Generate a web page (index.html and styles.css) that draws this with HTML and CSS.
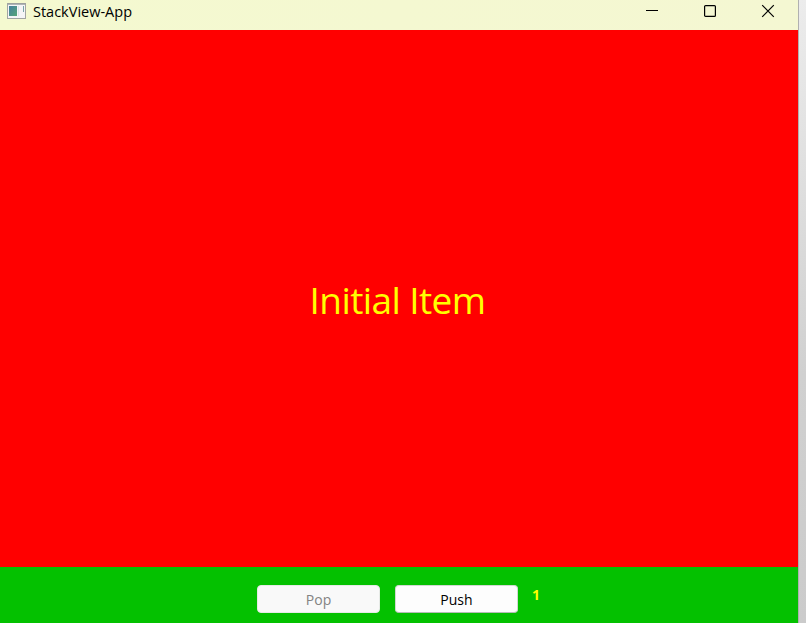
FILE: index.html
```html
<!DOCTYPE html>
<html lang="en">
<head>
<meta charset="utf-8">
<title>StackView-App</title>
<link rel="stylesheet" href="styles.css">
</head>
<body>
<main class="window">
  <header class="titlebar">
    <svg class="app-icon" width="19" height="16" viewBox="0 0 19 16">
      <defs><linearGradient id="pane" x2="1" y2="1"><stop offset="0" stop-color="#477f9f"/><stop offset="1" stop-color="#55a578"/></linearGradient></defs>
      <rect x=".5" y=".5" width="18" height="15" fill="#f5f5f7" stroke="#a2a5a2"/>
      <path d="M1 1.2h17" stroke="#92999a"/>
      <rect x="2" y="3" width="8" height="10" fill="url(#pane)"/>
      <path d="M11.5 3v10" stroke="#dfe3e8"/>
      <path d="M16.5 3v6" stroke="#79a5a7"/>
    </svg>
    <h1 class="title">StackView-App</h1>
    <nav class="controls">
      <svg width="14" height="14" viewBox="0 0 14 14"><path d="M1 6.5h12" stroke="#000"/></svg>
      <svg width="14" height="14" viewBox="0 0 14 14"><rect x="1.6" y="1.6" width="10.8" height="10.8" rx="1" fill="none" stroke="#000" stroke-width="1.2"/></svg>
      <svg width="14" height="14" viewBox="0 0 14 14"><path d="M1.2 1.2l11.6 11.6M12.8 1.2L1.2 12.8" stroke="#000" stroke-width="1.2"/></svg>
    </nav>
  </header>
  <section class="stack"><span class="item">Initial Item</span></section>
  <footer class="toolbar">
    <button class="button" disabled><span>Pop</span></button>
    <button class="button"><span>Push</span></button>
    <span class="depth">1</span>
  </footer>
</main>
</body>
</html>
```
FILE: styles.css
```css
* { box-sizing: border-box; }
body {
  margin: 0;
  height: 623px;
  overflow: hidden;
  background: linear-gradient(#ececec, #d0d0d0 60%, #cbcbcb);
  font-family: "Open Sans", "Noto Sans", sans-serif;
}
.window {
  width: 799px;
  height: 623px;
  display: flex;
  flex-direction: column;
  border-right: 1px solid #b0b0b0;
}
.titlebar {
  height: 30px;
  display: flex;
  align-items: flex-start;
  padding: 3px 23px 0 7px;
  background: linear-gradient(90deg, #f4f9d0, #f4f7d2);
}
.app-icon { flex: none; }
.title {
  margin: -1px 0 0 7px;
  font-size: 14.5px;
  font-weight: 400;
  line-height: 20px;
  letter-spacing: 0;
  color: #000;
}
.controls {
  display: flex;
  gap: 45px;
  margin: 1px 0 0 auto;
}
.controls svg:last-child { margin-left: -1px; }
.controls svg:first-child { margin-right: -1px; }
.stack {
  height: 537px;
  background: #f00;
  display: flex;
  justify-content: center;
  align-items: center;
  padding: 3px 3px 0 0;
}
.item {
  font-size: 37px;
  line-height: 50px;
  letter-spacing: -0.6px;
  color: #ff0;
  white-space: nowrap;
}
.toolbar {
  flex: 1;
  display: flex;
  align-items: flex-start;
  padding: 18px 0 0 257px;
  gap: 15px;
  background: #04c100;
}
.button {
  width: 123px;
  height: 28px;
  padding: 1px 0 0;
  border: 1px solid #d2d8d2;
  border-bottom-color: #b5bdb5;
  border-radius: 4px;
  background: #fdfdfd;
  font: 14px/20px "Open Sans", sans-serif;
  color: #000;
}
.button:disabled {
  background: #f9f9f9;
  border-color: #e6eae6;
  color: #838383;
}
.depth {
  margin-left: -1px;
  font-size: 14px;
  font-weight: 700;
  line-height: 20px;
  color: #ff0;
}
```
